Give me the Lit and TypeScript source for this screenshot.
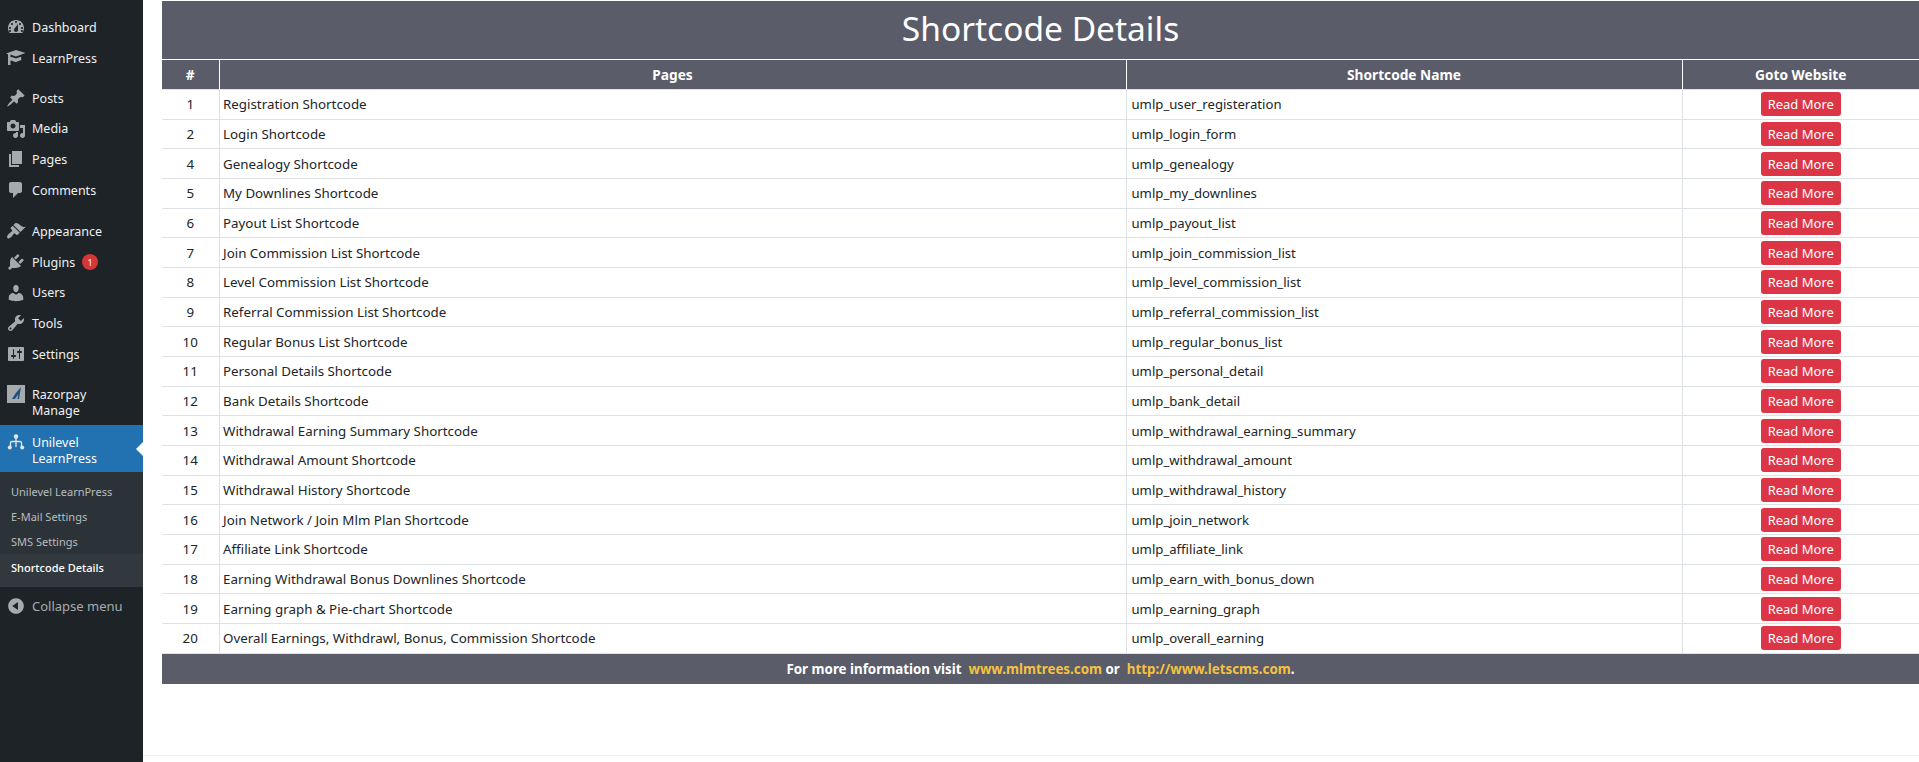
import { LitElement, html, css, svg } from "lit";
import { customElement } from "lit/decorators.js";

const P: Record<string, string> = {
  dashboard: "M3.76 16h12.48c1.1-1.37 1.76-3.11 1.76-5 0-4.42-3.58-8-8-8s-8 3.58-8 8c0 1.89.66 3.63 1.76 5zM10 4c.55 0 1 .45 1 1s-.45 1-1 1-1-.45-1-1 .45-1 1-1zM6 6c.55 0 1 .45 1 1s-.45 1-1 1-1-.45-1-1 .45-1 1-1zm8 0c.55 0 1 .45 1 1s-.45 1-1 1-1-.45-1-1 .45-1 1-1zm-5.37 5.55L12 7v6c0 1.1-.9 2-2 2s-2-.9-2-2c0-.57.24-1.08.63-1.45zM4 10c.55 0 1 .45 1 1s-.45 1-1 1-1-.45-1-1 .45-1 1-1zm12 0c.55 0 1 .45 1 1s-.45 1-1 1-1-.45-1-1 .45-1 1-1zm-12 3c.55 0 1 .45 1 1s-.45 1-1 1-1-.45-1-1 .45-1 1-1zm12 0c.55 0 1 .45 1 1s-.45 1-1 1-1-.45-1-1 .45-1 1-1z",
  learn: "M0 5.500L10 2l9.500 3-9.500 3.600-5.500-2v2.300c2.200.2 3.600.8 5.500 1.600 1.900-.8 3.400-1.400 5.200-1.800v3.600c-2 .4-3.400 1-5.200 1.900-1.900-.9-3.400-1.500-5.500-1.800V17H2V6.300z",
  post: "M10.44 3.02l1.82-1.82 6.36 6.35-1.83 1.82c-1.05-.68-2.48-.57-3.41.36l-.75.75c-.92.93-1.04 2.35-.35 3.41l-1.83 1.82-2.41-2.41-2.8 2.79c-.42.42-3.38 2.71-3.8 2.29s1.86-3.39 2.28-3.81l2.79-2.79L4.1 9.36l1.83-1.82c1.05.69 2.48.57 3.4-.36l.75-.75c.93-.92 1.05-2.35.36-3.41z",
  media: "M13 11V4c0-.55-.45-1-1-1h-1.67L9 1H5L3.67 3H2c-.55 0-1 .45-1 1v7c0 .55.45 1 1 1h10c.55 0 1-.45 1-1zM7 4.5c1.38 0 2.5 1.12 2.5 2.5S8.38 9.5 7 9.5 4.5 8.38 4.5 7 5.62 4.5 7 4.5zM14 6h5v10.5c0 1.38-1.12 2.5-2.5 2.5S14 17.88 14 16.5s1.12-2.5 2.5-2.5c.17 0 .34.02.5.05V9h-3V6zm-4 8.05V13h2v3.5c0 1.38-1.12 2.5-2.5 2.5S7 17.88 7 16.5 8.12 14 9.5 14c.17 0 .34.02.5.05z",
  page: "M6 15V2h10v13H6zm-1 1h8v2H3V5h2v11z",
  comments: "M5 2h9c1.1 0 2 .9 2 2v7c0 1.1-.9 2-2 2h-2l-5 5v-5H5c-1.1 0-2-.9-2-2V4c0-1.1.9-2 2-2z",
  appearance: "M14.5 11L7.400 4l1.500-1.500c.5-.6 2.300-.5 3.500.3 1.200.8 1.400 1.300 2.900 2.100 1.200.6 2.500 1.300 4.500.9zm-.7.8L6.700 4.700 4.900 6.500c-.4.4-.4 1 0 1.400L6 8.900c.4.4.4 1 0 1.400-.6.600-1.400 1.100-2.200 1.700-.4.300-.7.500-1 .800-1.300 1.300-2.200 3.200-1.500 4.300.7 1 2.700.2 4-1.100.300-.300.600-.700.800-1 .600-.800 1.100-1.600 1.700-2.200.400-.400 1-.400 1.400 0l1 1c.400.400 1 .400 1.400 0z",
  plugins: "M13.11 4.36L9.87 7.6 8 5.73l3.24-3.24c.35-.34 1.05-.2 1.56.32.52.51.66 1.21.31 1.55zm-8 1.77l.91-1.12 9.01 9.01-1.19.84c-.71.71-2.63 1.16-3.82 1.16H6.14L4.9 17.26c-.59.59-1.54.59-2.12 0-.59-.58-.59-1.53 0-2.12l1.24-1.24v-3.88c0-1.13.4-3.19 1.09-3.89zm7.26 3.97l3.24-3.24c.34-.35 1.04-.21 1.55.31.52.51.66 1.21.31 1.55l-3.24 3.25z",
  users: "M10 9.25c-2.27 0-2.73-3.44-2.73-3.44C7 4.02 7.82 2 9.97 2c2.16 0 2.98 2.02 2.71 3.81 0 0-.41 3.44-2.68 3.44zm0 2.57L12.72 10c2.39 0 4.52 2.33 4.52 4.53v2.49s-3.65 1.13-7.24 1.13c-3.65 0-7.24-1.13-7.24-1.13v-2.49c0-2.25 1.94-4.48 4.47-4.48z",
  tools: "M16.68 9.77c-1.34 1.34-3.3 1.67-4.95.99l-5.41 6.52c-.99.99-2.59.99-3.58 0s-.99-2.59 0-3.57l6.52-5.42c-.68-1.65-.35-3.61.99-4.95 1.28-1.28 3.12-1.62 4.72-1.06l-2.89 2.89 2.82 2.82 2.86-2.87c.53 1.58.18 3.39-1.08 4.65zM3.81 16.21c.4.39 1.04.39 1.43 0 .4-.4.4-1.04 0-1.43-.39-.4-1.03-.4-1.43 0-.39.39-.39 1.03 0 1.43z",
  settings: "M18 16V4c0-.55-.45-1-1-1H3c-.55 0-1 .45-1 1v12c0 .55.45 1 1 1h14c.55 0 1-.45 1-1zM8 11h1c.55 0 1 .45 1 1s-.45 1-1 1H8v1.5c0 .28-.22.5-.5.5s-.5-.22-.5-.5V13H6c-.55 0-1-.45-1-1s.45-1 1-1h1V5.5c0-.28.22-.5.5-.5s.5.22.5.5V11zm5-2h-1c-.55 0-1-.45-1-1s.45-1 1-1h1V5.5c0-.28.22-.5.5-.5s.5.22.5.5V7h1c.55 0 1 .45 1 1s-.45 1-1 1h-1v5.5c0 .28-.22.5-.5.5s-.5-.22-.5-.5V9z",
  collapse: "M10 2.16c4.33 0 7.84 3.51 7.84 7.84s-3.51 7.84-7.84 7.84S2.16 14.33 2.16 10 5.71 2.16 10 2.16zm2 11.72V6.12L6.18 9.97z",
};

const icon = (k: string) =>
  html`<svg class="ic" viewBox="0 0 20 20" fill="currentColor" fill-rule="evenodd">${svg`<path d=${P[k]}></path>`}</svg>`;

const tree = html`<svg class="ic" viewBox="0 0 20 20" fill="currentColor">
  <path d="M10 4v5M4.500 15v-4a1.500 1.500 0 0 1 1.500-1.500h8a1.500 1.500 0 0 1 1.500 1.500v4M10 9.500V15" fill="none" stroke="currentColor" stroke-width="1.300"></path>
  <circle cx="10" cy="4.500" r="2.200"></circle><circle cx="3.800" cy="15.500" r="2"></circle><circle cx="16.200" cy="15.500" r="2"></circle>
</svg>`;

const rows: [number, string, string][] = [
  [1, "Registration Shortcode", "umlp_user_registeration"],
  [2, "Login Shortcode", "umlp_login_form"],
  [4, "Genealogy Shortcode", "umlp_genealogy"],
  [5, "My Downlines Shortcode", "umlp_my_downlines"],
  [6, "Payout List Shortcode", "umlp_payout_list"],
  [7, "Join Commission List Shortcode", "umlp_join_commission_list"],
  [8, "Level Commission List Shortcode", "umlp_level_commission_list"],
  [9, "Referral Commission List Shortcode", "umlp_referral_commission_list"],
  [10, "Regular Bonus List Shortcode", "umlp_regular_bonus_list"],
  [11, "Personal Details Shortcode", "umlp_personal_detail"],
  [12, "Bank Details Shortcode", "umlp_bank_detail"],
  [13, "Withdrawal Earning Summary Shortcode", "umlp_withdrawal_earning_summary"],
  [14, "Withdrawal Amount Shortcode", "umlp_withdrawal_amount"],
  [15, "Withdrawal History Shortcode", "umlp_withdrawal_history"],
  [16, "Join Network / Join Mlm Plan Shortcode", "umlp_join_network"],
  [17, "Affiliate Link Shortcode", "umlp_affiliate_link"],
  [18, "Earning Withdrawal Bonus Downlines Shortcode", "umlp_earn_with_bonus_down"],
  [19, "Earning graph & Pie-chart Shortcode", "umlp_earning_graph"],
  [20, "Overall Earnings, Withdrawl, Bonus, Commission Shortcode", "umlp_overall_earning"],
];

@customElement("app-root")
export class AppRoot extends LitElement {
  static styles = css`
    :host { display: block; font-family: "Noto Sans", "Open Sans", sans-serif; height: 762px; overflow: hidden; background: #fff; }
    .page { display: flex; height: 762px; }
    .side { width: 143px; flex: none; background: #1d2327; color: #f0f0f1; font-size: 12.500px; padding-top: 12px; box-sizing: border-box; }
    .item { display: flex; align-items: center; height: 30.700px; padding-left: 32px; position: relative; }
    .item .ic { position: absolute; left: 6px; top: 5px; width: 20px; height: 20px; color: #a7aaad; }
    .gap { margin-top: 9.500px; }
    .gap2 { margin-top: 10.500px; }
    .gap3 { margin-top: 8.500px; }
    .two { height: 47px; line-height: 16px; }
    .two .ic { top: 8px; }
    .two .lbl { padding-top: 2px; }
    .rz { position: absolute; left: 7px; top: 7px; width: 18px; height: 18px; background: #a7aaad; }
    .rz svg { display: block; }
    .active { background: #2271b1; color: #fff; margin-top: 0; }
    .active .lbl { padding-top: 4px; }
    .active .ic { color: #e3e8ec; left: 6px; top: 7px; }
    .active::after { content: ""; position: absolute; right: 0; top: 17px; border: 7px solid transparent; border-right-color: #fff; border-left-width: 0; }
    .subs { background: #2c3338; padding-top: 6.500px; font-size: 11px; color: #b9bcbf; }
    .sub { height: 25px; display: flex; align-items: center; padding-left: 11px; }
    .sub.cur { color: #fff; font-weight: 500; background: #32393e; height: 33px; padding-bottom: 5px; box-sizing: border-box; }
    .collapse { color: #a7aaad; margin-top: 4px; font-size: 13px; }
    .badge { display: inline-flex; align-items: center; justify-content: center; width: 16px; height: 16px; border-radius: 50%; background: #d63638; color: #fff; font-size: 9px; margin-left: 7px; }
    main { flex: 1; min-width: 0; padding: 1px 0 0 19px; box-sizing: border-box; border-bottom: 1px solid #eceeef; height: 756px; }
    h1 { margin: 0; background: #5a5c69; color: #fff; font-weight: 400; font-size: 33.500px; height: 58px; line-height: 55px; text-align: center; }
    table { width: 100%; border-collapse: collapse; table-layout: fixed; font-size: 13.350px; color: #212529; }
    col.a { width: 57px; } col.b { width: 907px; } col.c { width: 556px; }
    th { background: #5a5c69; color: #fff; font-weight: 700; font-size: 13.700px; height: 30px; padding: 0; border: 1px solid #fff; border-bottom: 0; box-sizing: border-box; }
    th:first-child, td:first-child { border-left: 0; }
    th:last-child, td:last-child { border-right: 0; }
    td { height: 29.680px; padding: 0 3.500px; border: 1px solid #dee2e6; box-sizing: border-box; }
    td.n { text-align: center; }
    td.g { text-align: center; }
    .code { font-size: 13.150px; padding-left: 5px; }
    .btn { display: inline-block; background: #dc3545; color: #fff; font-size: 13px; border-radius: 3px; width: 80px; height: 24px; line-height: 24px; vertical-align: middle; }
    .foot { background: #5a5c69; color: #fff; font-weight: 700; font-size: 13.350px; text-align: center; height: 30px; line-height: 30px; white-space: pre; }
    .foot a { color: #f6c23e; }
  `;

  render() {
    return html`<div class="page">
      <nav class="side">
        <div class="item">${icon("dashboard")}Dashboard</div>
        <div class="item">${icon("learn")}LearnPress</div>
        <div class="item gap">${icon("post")}Posts</div>
        <div class="item">${icon("media")}Media</div>
        <div class="item">${icon("page")}Pages</div>
        <div class="item">${icon("comments")}Comments</div>
        <div class="item gap2">${icon("appearance")}Appearance</div>
        <div class="item">${icon("plugins")}Plugins<span class="badge">1</span></div>
        <div class="item">${icon("users")}Users</div>
        <div class="item">${icon("tools")}Tools</div>
        <div class="item">${icon("settings")}Settings</div>
        <div class="item two gap3"><span class="rz"><svg viewBox="0 0 18 18" width="18" height="18"><path d="M5 14l3.500-5.500L14 2l-2 12h-1.500l.8-5L8 14z" fill="#1f4f82"></path></svg></span><span class="lbl">Razorpay<br />Manage</span></div>
        <div class="item two active">${tree}<span class="lbl">Unilevel<br />LearnPress</span></div>
        <div class="subs">
          <div class="sub">Unilevel LearnPress</div>
          <div class="sub">E-Mail Settings</div>
          <div class="sub">SMS Settings</div>
          <div class="sub cur">Shortcode Details</div>
        </div>
        <div class="item collapse">${icon("collapse")}Collapse menu</div>
      </nav>
      <main>
        <h1>Shortcode Details</h1>
        <table>
          <colgroup><col class="a" /><col class="b" /><col class="c" /><col /></colgroup>
          <thead><tr><th>#</th><th>Pages</th><th>Shortcode Name</th><th>Goto Website</th></tr></thead>
          <tbody>
            ${rows.map(
              ([n, a, b]) => html`<tr><td class="n">${n}</td><td>${a}</td><td class="code">${b}</td><td class="g"><span class="btn">Read More</span></td></tr>`
            )}
          </tbody>
        </table>
        <div class="foot">For more information visit  <a>www.mlmtrees.com</a> or  <a>http://www.letscms.com</a>.</div>
      </main>
    </div>`;
  }
}
